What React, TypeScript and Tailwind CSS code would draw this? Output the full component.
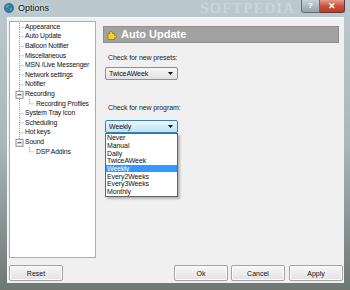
import React from "react";

type TreeItem = {
  label: string;
  level: 0 | 1;
  box?: boolean;
  last?: boolean;
  cont?: boolean;
};

const tree: TreeItem[] = [
  { label: "Appearance", level: 0 },
  { label: "Auto Update", level: 0 },
  { label: "Balloon Notifier", level: 0 },
  { label: "Miscellaneous", level: 0 },
  { label: "MSN /Live Messenger", level: 0 },
  { label: "Network settings", level: 0 },
  { label: "Notifier", level: 0 },
  { label: "Recording", level: 0, box: true },
  { label: "Recording Profiles", level: 1, cont: true },
  { label: "System Tray Icon", level: 0 },
  { label: "Scheduling", level: 0 },
  { label: "Hot keys", level: 0 },
  { label: "Sound", level: 0, box: true, last: true },
  { label: "DSP Addins", level: 1, cont: false },
];

const options = ["Never", "Manual", "Daily", "TwiceAWeek", "Weekly", "Every2Weeks", "Every3Weeks", "Monthly"];

const dot = { stroke: "#a0a0a0", strokeWidth: 1, strokeDasharray: "1 1" };

const Gutter = ({ item }: { item: TreeItem }) => {
  const h = 9.6;
  const m = 4.8;
  if (item.level === 1) {
    return (
      <svg width={25} height={h} viewBox={`0 0 25 ${h}`} className="shrink-0">
        {item.cont && <line x1={9.5} y1={0} x2={9.5} y2={h} {...dot} />}
        <line x1={19.5} y1={0} x2={19.5} y2={m} {...dot} />
        <line x1={19.5} y1={m} x2={24} y2={m} {...dot} />
      </svg>
    );
  }
  return (
    <svg width={14} height={h} viewBox={`0 0 14 ${h}`} className="shrink-0">
      <line x1={9.5} y1={0} x2={9.5} y2={item.last ? m : h} {...dot} />
      <line x1={9.5} y1={m} x2={14} y2={m} {...dot} />
      {item.box && (
        <>
          <rect x={6} y={m - 3.5} width={7} height={7} fill="#fff" stroke="#8c8c8c" strokeWidth={1} />
          <line x1={7.5} y1={m} x2={11.5} y2={m} stroke="#333" strokeWidth={1} />
        </>
      )}
    </svg>
  );
};

const Arrow = () => (
  <svg width={5} height={3} viewBox="0 0 5 3" className="shrink-0">
    <path d="M0 0 L5 0 L2.5 3 Z" fill="#111" />
  </svg>
);

const Button = ({ label }: { label: string }) => (
  <button className="w-[54px] h-[16px] rounded-[2px] border border-[#a3a3a3] bg-linear-to-b from-[#f8f8f8] to-[#e2e2e2] shadow-[inset_0_0_0_1px_#fcfcfc] text-[7px] text-[#111] leading-none flex items-center justify-center">
    {label}
  </button>
);

export default function App() {
  return (
    <div className="w-[350px] h-[290px] overflow-hidden flex flex-col bg-linear-to-b from-[#bccacf] via-[#a9b7bb] to-[#6f7773] font-['Liberation_Sans',Arial,sans-serif]">
      {/* Title bar */}
      <div className="h-[17px] flex items-start shrink-0">
        <div className="flex items-center h-[16px] pl-[4px]">
          <svg width={10} height={10} viewBox="0 0 10 10">
            <circle cx={5} cy={5} r={4.6} fill="#2f78c4" stroke="#1d4f86" strokeWidth={0.6} />
            <path d="M2 3 C3 1.6 5 1.5 5.5 2.6 C5 3.6 4 3.6 4.2 4.8 C3.4 5.6 2.2 5 1.6 4.2 Z" fill="#5fb04a" />
            <path d="M5.8 5 C7 4.6 8.4 5.2 8.2 6.6 C7.6 8 6.4 8.4 5.8 7.6 C6.2 6.8 5.4 6 5.8 5 Z" fill="#5fb04a" />
          </svg>
          <span className="ml-[4px] text-[9px] text-[#111] leading-none [text-shadow:0_0_4px_#ffffff]">Options</span>
        </div>
        <div className="flex-1 flex justify-end pr-[6px] pt-[1px]">
          <span className="text-[15px] font-bold tracking-[1px] leading-none text-white/25 font-['Liberation_Serif',serif]">SOFTPEDIA</span>
        </div>
        <div className="flex mr-[5px]">
          <div className="w-[19px] h-[13px] rounded-bl-[3px] border border-t-0 border-[#5f6e74] bg-linear-to-b from-[#c7d3d8] to-[#95a5ab] flex items-center justify-center text-[8px] font-bold text-white leading-none">
            ?
          </div>
          <div className="w-[25px] h-[13px] rounded-br-[3px] border border-t-0 border-l-0 border-[#5f3a36] bg-linear-to-b from-[#e59a8c] via-[#c9503d] to-[#c0392b] flex items-center justify-center text-[9px] font-bold text-white leading-none">
            ✕
          </div>
        </div>
      </div>

      {/* Client area */}
      <div className="flex-1 ml-[7px] mr-[6px] mb-[7px] bg-[#f0f0f0] border-t border-l border-[#f8f8f8] flex flex-col">
        <div className="flex pl-[1px] pt-[3px]">
          {/* Tree */}
          <div className="w-[87px] h-[237px] bg-white border border-[#acacac] pt-[0.5px]">
            {tree.map((item) => (
              <div key={item.label} className="h-[9.6px] flex items-center">
                <Gutter item={item} />
                <span className="ml-[1px] text-[6.8px] tracking-[-0.15px] text-[#111] leading-none whitespace-nowrap">
                  {item.label}
                </span>
              </div>
            ))}
          </div>

          {/* Settings page */}
          <div className="flex-1 h-[237px] ml-[3px] mr-[1px] px-[4px] pt-[5px] flex flex-col items-start">
            <div className="w-full h-[17px] bg-[#a2a2a2] border border-[#8f8f8f] flex items-center pl-[3px]">
              <svg width={10} height={10} viewBox="0 0 10 10">
                <path
                  d="M1 3.5 H3 C2.6 2.4 3 1.2 4.2 1.2 C5.4 1.2 5.8 2.4 5.4 3.5 H7.5 V5.4 C8.6 5 9.6 5.4 9.6 6.6 C9.6 7.8 8.6 8.2 7.5 7.8 V9.5 H1 Z"
                  fill="#f3d12a"
                  stroke="#7a6110"
                  strokeWidth={0.6}
                />
              </svg>
              <span className="ml-[4px] text-[11px] font-bold text-white leading-none">Auto Update</span>
            </div>

            <span className="mt-[9.5px] ml-[5px] text-[7px] tracking-[-0.1px] leading-[9px] text-[#1a1a1a]">
              Check for new presets:
            </span>
            <div className="mt-[5.5px] ml-[2px] w-[73px] h-[13px] rounded-[2px] border border-[#8e8e8e] bg-linear-to-b from-[#f7f7f7] to-[#e1e1e1] flex items-center pl-[3px] pr-[4px]">
              <span className="flex-1 text-[7px] tracking-[-0.1px] leading-none text-[#111]">TwiceAWeek</span>
              <Arrow />
            </div>

            <span className="mt-[22.5px] ml-[5px] text-[7px] tracking-[-0.1px] leading-[9px] text-[#1a1a1a]">
              Check for new program:
            </span>
            <div className="relative mt-[8.5px] ml-[2px] w-[73px] h-[13px]">
              <div className="w-full h-full rounded-[2px] border border-[#3c7fb1] bg-linear-to-b from-[#eaf6fd] to-[#bfe3f7] flex items-center pl-[3px] pr-[4px]">
                <span className="flex-1 text-[7px] tracking-[-0.1px] leading-none text-[#111]">Weekly</span>
                <Arrow />
              </div>
              {/* open list */}
              <div className="absolute top-full left-0 w-[73px] bg-white border border-[#646464] shadow-[2px_2px_2px_rgba(0,0,0,0.25)] flex flex-col">
                {options.map((o) => (
                  <div
                    key={o}
                    className={`h-[7.7px] flex items-center pl-[1px] text-[7px] tracking-[-0.1px] leading-none ${
                      o === "Weekly" ? "bg-[#3399ff] text-white" : "text-[#111]"
                    }`}
                  >
                    {o}
                  </div>
                ))}
              </div>
            </div>
          </div>
        </div>

        {/* Buttons */}
        <div className="flex items-center mt-[7px] pl-[1px] pr-[1px]">
          <Button label="Reset" />
          <div className="flex-1" />
          <Button label="Ok" />
          <div className="w-[3px]" />
          <Button label="Cancel" />
          <div className="w-[4px]" />
          <Button label="Apply" />
        </div>
      </div>
    </div>
  );
}
